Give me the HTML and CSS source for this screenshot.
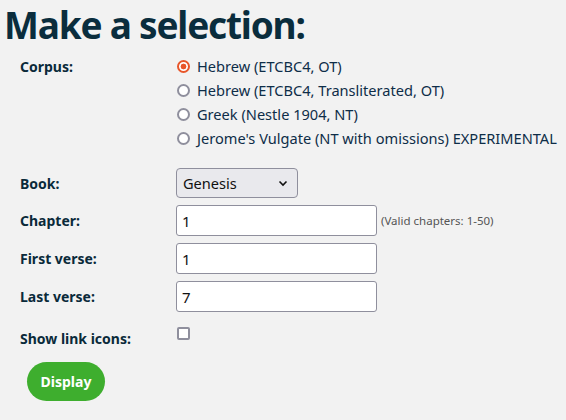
FILE: index.html
```html
<!DOCTYPE html>
<html>
<head>
<meta charset="utf-8">
<link rel="stylesheet" href="styles.css">
</head>
<body>
<h1 class="title">Make a selection:</h1>
<form class="form">
  <div class="label label-top">Corpus:</div>
  <div class="radios">
    <label class="radio-row"><input type="radio" name="corpus" class="radio" checked> Hebrew (ETCBC4, OT)</label>
    <label class="radio-row"><input type="radio" name="corpus" class="radio"> Hebrew (ETCBC4, Transliterated, OT)</label>
    <label class="radio-row"><input type="radio" name="corpus" class="radio"> Greek (Nestle 1904, NT)</label>
    <label class="radio-row"><input type="radio" name="corpus" class="radio"> Jerome's Vulgate (NT with omissions) EXPERIMENTAL</label>
  </div>

  <div class="label">Book:</div>
  <div class="control">
    <div class="select"><span>Genesis</span>
      <svg class="chev" width="10" height="7" viewBox="0 0 10 7"><path d="M1.5 1.5 L5 5 L8.5 1.5" fill="none" stroke="#111" stroke-width="1.6"/></svg>
    </div>
  </div>

  <div class="label">Chapter:</div>
  <div class="control"><input class="text" type="text" value="1"><span class="hint">(Valid chapters: 1-50)</span></div>

  <div class="label">First verse:</div>
  <div class="control"><input class="text" type="text" value="1"></div>

  <div class="label">Last verse:</div>
  <div class="control"><input class="text" type="text" value="7"></div>

  <div class="label label-check">Show link icons:</div>
  <div class="control control-check"><input type="checkbox" class="check"></div>
</form>
<button class="btn" type="button">Display</button>
</body>
</html>
```
FILE: styles.css
```css
html, body {
  margin: 0;
  padding: 0;
  background: #f2f2f2;
}
body {
  font-family: "Noto Sans", "Open Sans", sans-serif;
  font-size: 14px;
  color: #0b2a40;
  padding: 0 0 0 4px;
}
.title {
  margin: -1px 0 0 0;
  padding: 0;
  font-size: 37px;
  line-height: normal;
  font-weight: 700;
  color: #0a2d3d;
  letter-spacing: -1.2px;
  white-space: nowrap;
}
.form {
  display: grid;
  grid-template-columns: 156px 1fr;
  row-gap: 7px;
  margin-top: 7px;
  padding-left: 16px;
  align-items: center;
}
.label {
  font-weight: 700;
  color: #0a2a3a;
  font-size: 14px;
}
.label-top {
  align-self: start;
  line-height: 24px;
  margin-top: -2px;
}
.radios {
  display: flex;
  flex-direction: column;
  margin-top: -3px;
  margin-bottom: 11px;
}
.radio-row {
  display: flex;
  align-items: center;
  gap: 7px;
  height: 24px;
  color: #0e2d48;
  white-space: nowrap;
  font-size: 14.6px;
}
.radio {
  appearance: none;
  margin: 0 0 0 1px;
  width: 13px;
  height: 13px;
  border: 2px solid #8f8f9d;
  border-radius: 50%;
  background: #fff;
  box-sizing: border-box;
  flex: none;
}
.radio:checked {
  border-color: #e8562a;
  background: radial-gradient(circle, #e8562a 0 2.6px, #fff 3.2px);
}
.control {
  display: flex;
  align-items: center;
}
.select {
  width: 122px;
  height: 30px;
  box-sizing: border-box;
  border: 1px solid #8f8f9d;
  border-radius: 4px;
  background: #e9e9ed;
  display: flex;
  align-items: center;
  justify-content: space-between;
  padding: 0 9px 0 6px;
  font-size: 14.6px;
  color: #111;
}
.chev { display: block; }
.text {
  width: 201px;
  height: 31px;
  box-sizing: border-box;
  border: 1px solid #8f8f9d;
  border-radius: 3px;
  background: #fff;
  font-family: inherit;
  font-size: 15px;
  color: #111;
  padding: 0 5px;
  margin: 0;
}
.hint {
  margin-left: 4px;
  font-size: 11.5px;
  color: #555;
}
.label-check { margin-top: 10px; }
.control-check { margin-top: 8px; align-self: start; }
.check {
  appearance: none;
  margin: 0 0 0 1px;
  width: 13px;
  height: 13px;
  box-sizing: border-box;
  border: 2px solid #8f8f9d;
  border-radius: 2px;
  background: #fff;
}
.btn {
  margin: 14px 0 0 23px;
  width: 78px;
  height: 39px;
  border: none;
  border-radius: 20px;
  background: #3eae2e;
  color: #fff;
  font-family: inherit;
  font-weight: 700;
  font-size: 14px;
}
```
